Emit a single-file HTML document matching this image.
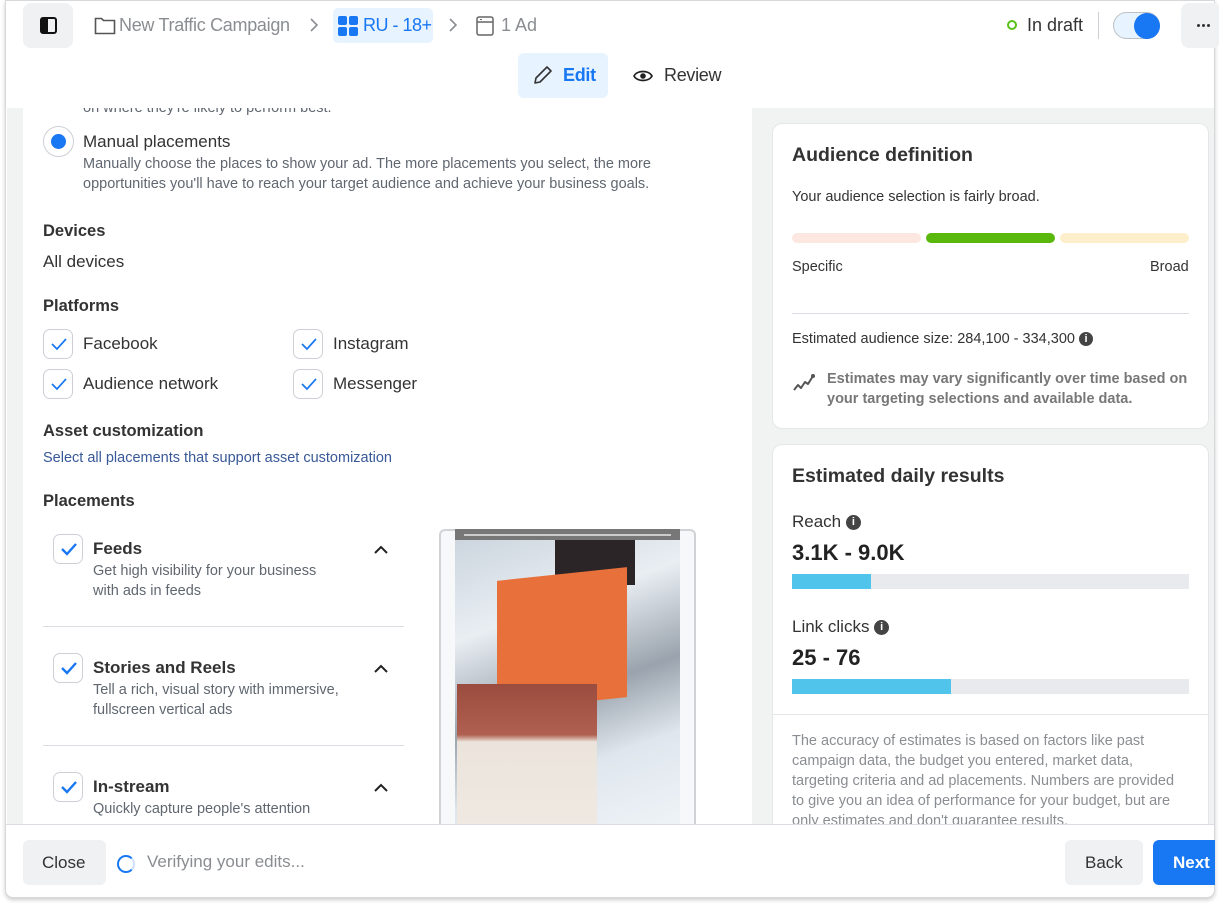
<!DOCTYPE html>
<html><head><meta charset="utf-8"><style>
*{box-sizing:border-box;margin:0;padding:0}
body{width:1219px;height:905px;background:#fff;font-family:"Liberation Sans",Arial,sans-serif;color:#1c1e21;position:relative;overflow:hidden}
.a{position:absolute}
.t{position:absolute;white-space:nowrap}
.cb{position:absolute;width:30px;height:30px;border:1px solid #ccd0d5;border-radius:7px;background:#fff}
.cb svg{position:absolute;left:6px;top:7px}
.h{font-weight:bold;font-size:17px;color:#333}
.sub{font-size:14.5px;color:#606770;line-height:20px}
.info{display:inline-block;width:15px;height:15px;border-radius:50%;background:#444;color:#fff;font-size:11px;font-weight:bold;text-align:center;line-height:15px;vertical-align:middle}
</style></head><body>
<div class="a" style="left:5px;top:0;width:1210px;height:898px;border:1px solid #d6d8da;border-radius:0 0 8px 8px;box-shadow:0 2px 4px rgba(0,0,0,.2);background:#fff"></div>
<div class="a" style="left:23px;top:3px;width:50px;height:45px;background:#f0f1f2;border-radius:8px"></div>
<div class="a" style="left:40px;top:17px;width:17px;height:17px;border:2px solid #111;border-radius:3px"><div class="a" style="left:0;top:0;width:6px;height:13px;background:#111"></div></div>
<svg class="a" style="left:94px;top:16px" width="22" height="19" viewBox="0 0 22 19"><path d="M1.5 2.5h6l2 2h11v13h-19z" fill="none" stroke="#555" stroke-width="1.6"/></svg>
<div class="t" style="left:119px;top:15px;font-size:18px;color:#8a8d91;letter-spacing:-0.3px">New Traffic Campaign</div>
<svg class="a" style="left:309px;top:18px" width="9" height="14"><path d="M2 1l6 6-6 6" fill="none" stroke="#8a8d91" stroke-width="1.6"/></svg>
<div class="a" style="left:333px;top:8px;width:100px;height:35px;background:#e7f3ff;border-radius:5px"></div>
<svg class="a" style="left:338px;top:16px" width="20" height="20"><rect x="0" y="0" width="9" height="9" rx="2" fill="#1877f2"/><rect x="11" y="0" width="9" height="9" rx="2" fill="#1877f2"/><rect x="0" y="11" width="9" height="9" rx="2" fill="#1877f2"/><rect x="11" y="11" width="9" height="9" rx="2" fill="#1877f2"/></svg>
<div class="t" style="left:363px;top:15px;font-size:18px;color:#1877f2;letter-spacing:-0.5px">RU - 18+</div>
<svg class="a" style="left:448px;top:18px" width="9" height="14"><path d="M2 1l6 6-6 6" fill="none" stroke="#8a8d91" stroke-width="1.6"/></svg>
<svg class="a" style="left:476px;top:16px" width="18" height="20"><rect x="1" y="1" width="16" height="18" rx="2" fill="none" stroke="#666" stroke-width="1.5"/><path d="M1 6h16" stroke="#666" stroke-width="1.5"/><path d="M4 3.5h2" stroke="#666"/></svg>
<div class="t" style="left:501px;top:15px;font-size:18px;color:#8a8d91">1 Ad</div>
<div class="a" style="left:1007px;top:20px;width:10px;height:10px;border:2.5px solid #5ac21a;border-radius:50%"></div>
<div class="t" style="left:1027px;top:15px;font-size:18px;color:#333">In draft</div>
<div class="a" style="left:1098px;top:12px;width:1px;height:27px;background:#ccd0d5"></div>
<div class="a" style="left:1113px;top:12px;width:47px;height:27px;background:#e7f3ff;border:1px solid #bcc0c4;border-radius:14px"></div>
<div class="a" style="left:1134px;top:13px;width:26px;height:26px;background:#1877f2;border-radius:50%"></div>
<div class="a" style="left:1181px;top:3px;width:40px;height:45px;background:#f0f1f2;border-radius:8px"></div>
<div class="a" style="left:1197px;top:24px;width:3px;height:3px;border-radius:50%;background:#333;box-shadow:5px 0 0 #333,10px 0 0 #333"></div>
<div class="a" style="left:518px;top:53px;width:90px;height:45px;background:#e7f3ff;border-radius:6px"></div>
<svg class="a" style="left:533px;top:65px" width="20" height="20"><path d="M2 18l1-5L14 2l4 4L7 17z" fill="none" stroke="#333" stroke-width="1.6" stroke-linejoin="round"/></svg>
<div class="t" style="left:563px;top:65px;font-size:18px;color:#1877f2;font-weight:bold;letter-spacing:-0.3px">Edit</div>
<svg class="a" style="left:633px;top:68px" width="20" height="16"><path d="M1 8C4 2 16 2 19 8C16 14 4 14 1 8z" fill="none" stroke="#222" stroke-width="1.7"/><circle cx="10" cy="8" r="2.8" fill="#222"/></svg>
<div class="t" style="left:664px;top:65px;font-size:18px;color:#333;letter-spacing:-0.3px">Review</div>
<div class="a" style="left:7px;top:108px;width:1207px;height:717px;background:#f1f2f2"></div>
<div class="a" style="left:23px;top:108px;width:729px;height:717px;background:#fff;overflow:hidden">
  <div class="t" style="left:60px;top:-8px;font-size:14.5px;color:#606770">on where they're likely to perform best.</div>
</div>
<div class="a" style="left:43px;top:126px;width:31px;height:31px;border:1px solid #ccd0d5;border-radius:50%;background:#fff"></div>
<div class="a" style="left:51px;top:134px;width:15px;height:15px;border-radius:50%;background:#1877f2"></div>
<div class="t" style="left:83px;top:132px;font-size:17px;color:#333">Manual placements</div>
<div class="a sub" style="left:83px;top:154px;width:620px">Manually choose the places to show your ad. The more placements you select, the more opportunities you'll have to reach your target audience and achieve your business goals.</div>
<div class="t h" style="left:43px;top:222px;font-size:16.5px">Devices</div>
<div class="t" style="left:43px;top:252px;font-size:17px;color:#333">All devices</div>
<div class="t h" style="left:43px;top:297px;font-size:16.5px">Platforms</div>
<div class="cb" style="left:43px;top:329px"><svg width="18" height="14"><path d="M2 7l5 5 9-10" fill="none" stroke="#1877f2" stroke-width="1.7"/></svg></div>
<div class="t" style="left:83px;top:334px;font-size:17px;color:#333">Facebook</div>
<div class="cb" style="left:293px;top:329px"><svg width="18" height="14"><path d="M2 7l5 5 9-10" fill="none" stroke="#1877f2" stroke-width="1.7"/></svg></div>
<div class="t" style="left:333px;top:334px;font-size:17px;color:#333">Instagram</div>
<div class="cb" style="left:43px;top:369px"><svg width="18" height="14"><path d="M2 7l5 5 9-10" fill="none" stroke="#1877f2" stroke-width="1.7"/></svg></div>
<div class="t" style="left:83px;top:374px;font-size:17px;color:#333">Audience network</div>
<div class="cb" style="left:293px;top:369px"><svg width="18" height="14"><path d="M2 7l5 5 9-10" fill="none" stroke="#1877f2" stroke-width="1.7"/></svg></div>
<div class="t" style="left:333px;top:374px;font-size:17px;color:#333">Messenger</div>
<div class="t h" style="left:43px;top:422px;font-size:16.5px">Asset customization</div>
<div class="t" style="left:43px;top:450px;font-size:14.5px;color:#385898">Select all placements that support asset customization</div>
<div class="t h" style="left:43px;top:492px;font-size:16.5px">Placements</div>
<div class="cb" style="left:53px;top:534px"><svg width="18" height="14"><path d="M2 7l5 5 9-10" fill="none" stroke="#1877f2" stroke-width="2.4"/></svg></div>
<div class="t h" style="left:93px;top:539px">Feeds</div>
<div class="a sub" style="left:93px;top:561px;width:250px">Get high visibility for your business with ads in feeds</div>
<svg class="a" style="left:374px;top:545px" width="14" height="9"><path d="M1 8l6-6 6 6" fill="none" stroke="#222" stroke-width="2"/></svg>
<div class="a" style="left:43px;top:626px;width:361px;height:1px;background:#dadde1"></div>
<div class="cb" style="left:53px;top:653px"><svg width="18" height="14"><path d="M2 7l5 5 9-10" fill="none" stroke="#1877f2" stroke-width="2.4"/></svg></div>
<div class="t h" style="left:93px;top:658px">Stories and Reels</div>
<div class="a sub" style="left:93px;top:680px;width:270px">Tell a rich, visual story with immersive, fullscreen vertical ads</div>
<svg class="a" style="left:374px;top:664px" width="14" height="9"><path d="M1 8l6-6 6 6" fill="none" stroke="#222" stroke-width="2"/></svg>
<div class="a" style="left:43px;top:745px;width:361px;height:1px;background:#dadde1"></div>
<div class="cb" style="left:53px;top:772px"><svg width="18" height="14"><path d="M2 7l5 5 9-10" fill="none" stroke="#1877f2" stroke-width="2.4"/></svg></div>
<div class="t h" style="left:93px;top:777px">In-stream</div>
<div class="a sub" style="left:93px;top:799px;width:270px">Quickly capture people's attention</div>
<svg class="a" style="left:374px;top:783px" width="14" height="9"><path d="M1 8l6-6 6 6" fill="none" stroke="#222" stroke-width="2"/></svg>
<div class="a" style="left:439px;top:529px;width:257px;height:296px;border:2px solid #d0d2d5;border-bottom:none;border-radius:6px 6px 0 0;background:#f7f8fa"></div>
<div class="a" style="left:455px;top:529px;width:225px;height:296px;overflow:hidden;background:linear-gradient(160deg,#c9d3dc 0%,#e9eef3 30%,#9aa3ad 55%,#dfe6ed 75%,#eef3f7 100%)">
  <div class="a" style="left:0;top:0;width:225px;height:11px;background:#777"></div>
  <div class="a" style="left:9px;top:5px;width:207px;height:2px;background:#ccc"></div>
  <div class="a" style="left:100px;top:11px;width:80px;height:45px;background:#2b2528"></div>
  <div class="a" style="left:42px;top:45px;width:130px;height:130px;background:#e8703a;transform:skewY(-6deg)"></div>
  <div class="a" style="left:2px;top:155px;width:140px;height:145px;background:linear-gradient(180deg,#9a4c3e 0%,#b06050 35%,#ebe4dc 40%,#efe9e2 100%)"></div>
  <div class="a" style="left:195px;top:300px;width:30px;height:30px;background:#7ab4de"></div>
</div>
<div class="a" style="left:772px;top:123px;width:437px;height:306px;background:#fff;border-radius:10px;border:1px solid #e4e6e9"></div>
<div class="t h" style="left:792px;top:144px;font-size:19.5px">Audience definition</div>
<div class="t" style="left:792px;top:189px;font-size:14.5px;color:#333">Your audience selection is fairly broad.</div>
<div class="a" style="left:792px;top:233px;width:129px;height:10px;background:#fde7e1;border-radius:5px"></div>
<div class="a" style="left:926px;top:233px;width:129px;height:10px;background:#5ab80d;border-radius:5px"></div>
<div class="a" style="left:1060px;top:233px;width:129px;height:10px;background:#fdefcc;border-radius:5px"></div>
<div class="t" style="left:792px;top:259px;font-size:14.5px;color:#333">Specific</div>
<div class="t" style="left:1150px;top:259px;font-size:14.5px;color:#333">Broad</div>
<div class="a" style="left:792px;top:313px;width:397px;height:1px;background:#dadde1"></div>
<div class="t" style="left:792px;top:331px;font-size:14.5px;color:#333">Estimated audience size: 284,100 - 334,300 <span class="info" style="width:14px;height:14px;line-height:14px">i</span></div>
<svg class="a" style="left:793px;top:373px" width="24" height="20"><path d="M1 17l4-5 3 3 4-6 3 2 5-8" fill="none" stroke="#555" stroke-width="2" stroke-linejoin="round"/><circle cx="20" cy="3" r="2" fill="#555"/></svg>
<div class="a" style="left:827px;top:369px;width:370px;font-size:14.5px;font-weight:bold;color:#777;line-height:20px">Estimates may vary significantly over time based on your targeting selections and available data.</div>
<div class="a" style="left:772px;top:444px;width:437px;height:400px;background:#fff;border-radius:10px;border:1px solid #e4e6e9"></div>
<div class="t h" style="left:792px;top:465px;font-size:19.5px">Estimated daily results</div>
<div class="t" style="left:792px;top:512px;font-size:17px;color:#333">Reach <span class="info">i</span></div>
<div class="t" style="left:792px;top:540px;font-size:22px;font-weight:bold;color:#222">3.1K - 9.0K</div>
<div class="a" style="left:792px;top:574px;width:397px;height:15px;background:#e9eaee"><div style="width:79px;height:15px;background:#50c4ea"></div></div>
<div class="t" style="left:792px;top:617px;font-size:17px;color:#333">Link clicks <span class="info">i</span></div>
<div class="t" style="left:792px;top:645px;font-size:22px;font-weight:bold;color:#222">25 - 76</div>
<div class="a" style="left:792px;top:679px;width:397px;height:15px;background:#e9eaee"><div style="width:159px;height:15px;background:#50c4ea"></div></div>
<div class="a" style="left:772px;top:714px;width:437px;height:1px;background:#e4e6e9"></div>
<div class="a" style="left:792px;top:731px;width:388px;font-size:14.5px;color:#8a8d91;line-height:20px">The accuracy of estimates is based on factors like past campaign data, the budget you entered, market data, targeting criteria and ad placements. Numbers are provided to give you an idea of performance for your budget, but are only estimates and don't guarantee results.</div>
<div class="a" style="left:6px;top:824px;width:1208px;height:73px;background:#fff;border-top:1px solid #dadde1;border-radius:0 0 8px 8px"></div>
<div class="a" style="left:23px;top:840px;width:83px;height:45px;background:#f0f1f2;border-radius:6px"></div>
<div class="t" style="left:42px;top:853px;font-size:17px;color:#333">Close</div>
<div class="a" style="left:117px;top:855px;width:18px;height:18px;border:2px solid #1877f2;border-right-color:#cde0fb;border-radius:50%"></div>
<div class="t" style="left:147px;top:852px;font-size:17px;color:#8a8d91">Verifying your edits...</div>
<div class="a" style="left:1065px;top:840px;width:78px;height:45px;background:#f0f1f2;border-radius:6px"></div>
<div class="t" style="left:1085px;top:853px;font-size:17px;color:#333">Back</div>
<div class="a" style="left:1153px;top:840px;width:62px;height:45px;background:#1877f2;border-radius:6px 0 0 6px"></div>
<div class="t" style="left:1173px;top:853px;font-size:17px;color:#fff;font-weight:bold">Next</div>
</body></html>
